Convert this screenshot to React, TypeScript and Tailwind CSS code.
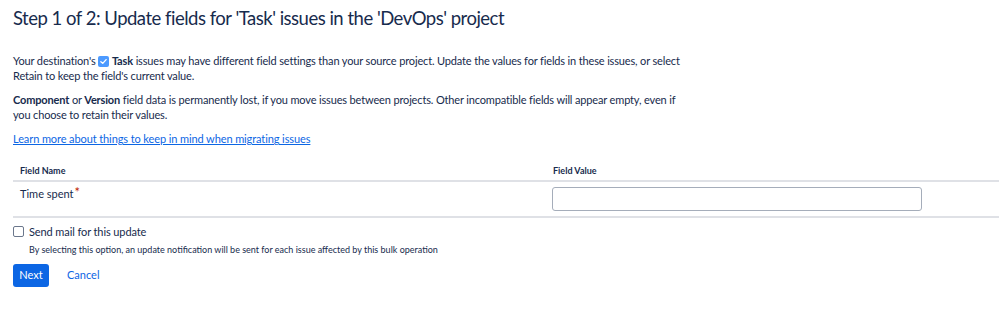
import React from "react";

export default function App() {
  return (
    <div className="w-[999px] h-[314px] bg-white text-[#172b4d] overflow-hidden" style={{ fontFamily: 'Lato, "Noto Sans", sans-serif' }}>
      <div className="pl-[13px] pt-[5px]">
        <h1 className="text-[18.5px] leading-[26px] font-normal tracking-[-0.5px]">Step 1 of 2: Update fields for 'Task' issues in the 'DevOps' project</h1>
        <p className="mt-[22px] text-[11px] leading-[15px] w-[674px] tracking-[-0.15px]">
          Your destination's{" "}
          <span className="inline-flex items-center justify-center w-[11px] h-[11px] bg-[#4c9aff] rounded-[2px] align-[-1px]">
            <svg viewBox="0 0 12 12" className="w-[9px] h-[9px]"><path d="M2.5 6.2 L5 8.5 L9.5 3.5" stroke="white" strokeWidth="1.8" fill="none" strokeLinecap="round" strokeLinejoin="round" /></svg>
          </span>{" "}
          <b className="font-bold">Task</b> issues may have different field settings than your source project. Update the values for fields in these issues, or select Retain to keep the field's current value.
        </p>
        <p className="mt-[9px] text-[11px] leading-[15px] w-[674px] tracking-[-0.15px]">
          <b className="font-bold">Component</b> or <b className="font-bold">Version</b> field data is permanently lost, if you move issues between projects. Other incompatible fields will appear empty, even if you choose to retain their values.
        </p>
        <a href="#" className="block mt-[9px] text-[11px] leading-[15px] text-[#0c66e4] underline tracking-[-0.1px]">Learn more about things to keep in mind when migrating issues</a>
        <div className="mt-[16px]">
          <div className="flex border-b-2 border-[#dfe1e6] h-[20px] items-center text-[9px] font-bold">
            <div className="w-[540px] pl-[7px]">Field Name</div>
            <div>Field Value</div>
          </div>
          <div className="flex border-b-2 border-[#dfe1e6] h-[36px] items-start text-[11px]">
            <div className="w-[539px] pl-[7px] leading-[20px]">Time spent<span className="text-[#bf2600] text-[13px] align-[1px] ml-[1px]">*</span></div>
            <input className="mt-[5px] w-[370px] h-[24px] border border-[#a5adba] rounded-[3px] bg-white" />
          </div>
        </div>
        <label className="flex items-center mt-[6px] gap-[5px] text-[11px] leading-[15px] tracking-[-0.1px]">
          <span className="w-[11px] h-[11px] border border-[#6b778c] rounded-[2px] bg-white" />
          Send mail for this update
        </label>
        <p className="ml-[16px] mt-[4px] text-[9px] leading-[14px]">By selecting this option, an update notification will be sent for each issue affected by this bulk operation</p>
        <div className="flex items-center mt-[7px] gap-[18px]">
          <button className="bg-[#0c66e4] text-white text-[11px] w-[36px] h-[23px] rounded-[3px]">Next</button>
          <a href="#" className="text-[#0c66e4] text-[11px]">Cancel</a>
        </div>
      </div>
    </div>
  );
}
